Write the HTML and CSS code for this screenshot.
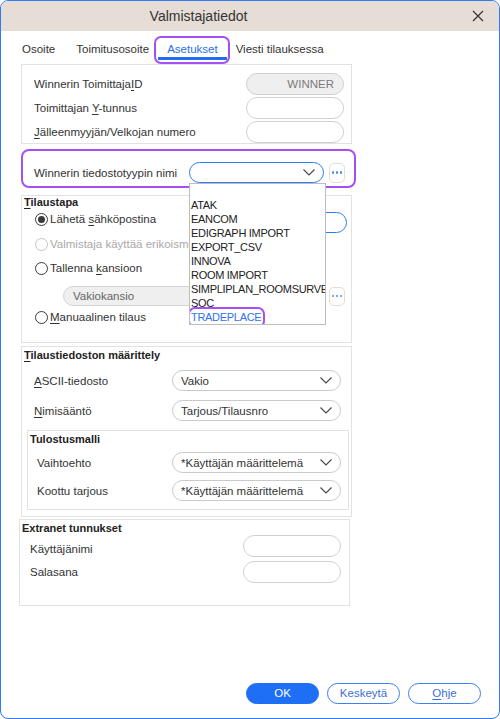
FILE: index.html
```html
<!DOCTYPE html>
<html>
<head>
<meta charset="utf-8">
<link rel="stylesheet" href="styles.css">
</head>
<body>
<div class="window">
  <div class="titlebar">
    <div class="title">Valmistajatiedot</div>
    <div class="close"><svg width="12" height="12" viewBox="0 0 12 12"><path d="M1 1 L11 11 M11 1 L1 11" stroke="#333" stroke-width="1.2" fill="none"/></svg></div>
  </div>
  <div class="tabs">
    <div class="tab first">Osoite</div>
    <div class="tab">Toimitusosoite</div>
    <div class="tab active">Asetukset<span class="hl-tab"></span></div>
    <div class="tab">Viesti tilauksessa</div>
  </div>
  <div class="content">
    <div class="group g1">
      <div class="row r1"><span class="lbl">Winnerin Toimittaja<u>I</u>D</span><div class="input ro">WINNER</div></div>
      <div class="row r1"><span class="lbl">Toimittajan <u>Y</u>-tunnus</span><div class="input"></div></div>
      <div class="row r1"><span class="lbl"><u>J</u>älleenmyyjän/Velkojan numero</span><div class="input"></div></div>
    </div>
    <div class="group g2">
      <div class="row r2">
        <span class="lbl w155">Winnerin tiedostotyypin nimi</span>
        <div class="combo-wrap">
          <div class="combo focus"><span></span><svg class="chev" width="12" height="7" viewBox="0 0 12 7"><path d="M0.5 0.5 L6 6 L11.5 0.5" stroke="#444" stroke-width="1.1" fill="none"/></svg></div>
          <div class="dropdown">
            <div class="opt">&nbsp;</div>
            <div class="opt">ATAK</div>
            <div class="opt">EANCOM</div>
            <div class="opt">EDIGRAPH IMPORT</div>
            <div class="opt">EXPORT_CSV</div>
            <div class="opt">INNOVA</div>
            <div class="opt">ROOM IMPORT</div>
            <div class="opt">SIMPLIPLAN_ROOMSURVEY</div>
            <div class="opt">SOC</div>
            <div class="opt sel"><span class="sel-txt">TRADEPLACE<span class="hl-opt"></span></span></div>
          </div>
        </div>
        <div class="dots"><i></i><i></i><i></i></div>
      </div>
    </div>
    <div class="group g3">
      <div class="gtitle"><u>T</u>ilaustapa</div>
      <div class="row rr rr1"><span class="radio on"></span><span class="lbl">Lähetä <u>s</u>ähköpostina</span><div class="input focus mail"></div></div>
      <div class="row rr rr2"><span class="radio dis"></span><span class="lbl dis clip"><u>V</u>almistaja käyttää erikoismuotoa</span></div>
      <div class="row rr rr3"><span class="radio"></span><span class="lbl">Tallenna <u>k</u>ansioon</span></div>
      <div class="row rr4"><div class="input folder">Vakiokansio</div><div class="dots"><i></i><i></i><i></i></div></div>
      <div class="row rr rr5"><span class="radio"></span><span class="lbl"><u>M</u>anuaalinen tilaus</span></div>
    </div>
    <div class="group g4">
      <div class="gtitle"><u>T</u>ilaustiedoston määrittely</div>
      <div class="row r4 r4a"><span class="lbl"><u>A</u>SCII-tiedosto</span><div class="combo"><span>Vakio</span><svg class="chev" width="12" height="7" viewBox="0 0 12 7"><path d="M0.5 0.5 L6 6 L11.5 0.5" stroke="#444" stroke-width="1.1" fill="none"/></svg></div></div>
      <div class="row r4 r4b"><span class="lbl"><u>N</u>imisääntö</span><div class="combo"><span>Tarjous/Tilausnro</span><svg class="chev" width="12" height="7" viewBox="0 0 12 7"><path d="M0.5 0.5 L6 6 L11.5 0.5" stroke="#444" stroke-width="1.1" fill="none"/></svg></div></div>
      <div class="group g4b">
        <div class="gtitle">Tulostusmalli</div>
        <div class="row r4c r4c1"><span class="lbl">Vaihtoehto</span><div class="combo"><span>*Käyttäjän määrittelemä</span><svg class="chev" width="12" height="7" viewBox="0 0 12 7"><path d="M0.5 0.5 L6 6 L11.5 0.5" stroke="#444" stroke-width="1.1" fill="none"/></svg></div></div>
        <div class="row r4c r4c2"><span class="lbl">Koottu tarjous</span><div class="combo"><span>*Käyttäjän määrittelemä</span><svg class="chev" width="12" height="7" viewBox="0 0 12 7"><path d="M0.5 0.5 L6 6 L11.5 0.5" stroke="#444" stroke-width="1.1" fill="none"/></svg></div></div>
      </div>
    </div>
    <div class="group g5">
      <div class="gtitle">Extranet tunnukset</div>
      <div class="row r5 r5a"><span class="lbl">Käyttäjänimi</span><div class="input"></div></div>
      <div class="row r5 r5b"><span class="lbl">Salasana</span><div class="input"></div></div>
    </div>
  </div>
  <div class="footer">
    <div class="btn primary">OK</div>
    <div class="btn">Keskeytä</div>
    <div class="btn"><u>O</u>hje</div>
  </div>
</div>
</body>
</html>
```

FILE: styles.css
```css
html, body {
  margin: 0;
  padding: 0;
  background: #fff;
}
body {
  font-family: "Liberation Sans", Arial, sans-serif;
  font-size: 11.5px;
  color: #333;
}
.window {
  width: 500px;
  height: 719px;
  box-sizing: border-box;
  border: 1px solid #2f7bf0;
  border-radius: 8px;
  overflow: hidden;
  display: flex;
  flex-direction: column;
  background: #fff;
}
.titlebar {
  height: 30px;
  flex: none;
  background: #e6ddd6;
  display: flex;
  align-items: center;
}
.title {
  flex: 1;
  text-align: center;
  font-size: 14px;
  color: #333;
  padding-right: 76px;
}
.close {
  width: 12px;
  height: 12px;
  margin-right: 15px;
  display: flex;
}
.tabs {
  display: flex;
  padding: 5px 0 0 12px;
  height: 24px;
  flex: none;
}
.tab {
  position: relative;
  padding: 5px 9px 0;
  line-height: 16px;
  border-bottom: 3px solid transparent;
  color: #333;
}
.tab.first {
  margin-right: 3px;
}
.tab.active {
  color: #2b6fe8;
  border-bottom-color: #1f6ef2;
}
.hl-tab {
  position: absolute;
  left: -4px;
  right: -3px;
  top: 0;
  bottom: -7px;
  border: 2px solid #a64ff5;
  border-radius: 7px;
}
.content {
  padding-left: 20px;
  display: flex;
  flex-direction: column;
  align-items: flex-start;
}
.group {
  box-sizing: border-box;
  border: 1px solid #e2e2e2;
  width: 331px;
  display: flex;
  flex-direction: column;
}
.row {
  display: flex;
  align-items: center;
}
.lbl {
  white-space: nowrap;
}
u {
  text-decoration: underline;
  text-underline-offset: 2px;
}
.input {
  box-sizing: border-box;
  width: 98px;
  height: 22px;
  border: 1px solid #d0d0d0;
  border-radius: 11px;
  margin-left: auto;
  background: #fff;
}
.input.ro {
  background: #efefef;
  color: #7a7a7a;
  text-align: right;
  padding-right: 9px;
  line-height: 20px;
}
.focus {
  border-color: #2f7bf0 !important;
}
/* group 1 */
.g1 {
  margin-top: 4px;
  height: 80px;
  padding: 8px 7px 4px 12px;
  gap: 2px;
}
.r1 {
  height: 22px;
}
/* group 2 */
.g2 {
  margin-top: 5px;
  width: 335px;
  height: 39px;
  border: 2px solid #a64ff5;
  border-radius: 8px;
  padding: 11px 0 0 11px;
}
.r2 {
  height: 21px;
}
.w155 {
  width: 155px;
}
.combo-wrap {
  position: relative;
}
.combo {
  box-sizing: border-box;
  width: 169px;
  height: 21px;
  border: 1px solid #c9c9c9;
  border-radius: 11px;
  display: flex;
  align-items: center;
  justify-content: space-between;
  padding: 0 8px 0 8px;
  margin-left: auto;
  background: #fff;
  color: #333;
}
.combo-wrap .combo {
  width: 135px;
}
.chev {
  flex: none;
}
.dots {
  box-sizing: border-box;
  width: 16px;
  height: 20px;
  border: 1px solid #e8dcd4;
  border-radius: 5px;
  display: flex;
  align-items: center;
  justify-content: center;
  gap: 1.5px;
  margin-left: 5px;
  background: #fff;
}
.dots i {
  width: 2.6px;
  height: 2.6px;
  border-radius: 50%;
  background: #4a90f0;
}
.dropdown {
  position: absolute;
  left: 0;
  top: 100%;
  width: 137px;
  box-sizing: border-box;
  border: 1px solid #bdbdbd;
  background: #fff;
  z-index: 5;
  overflow: hidden;
}
.opt {
  height: 14px;
  line-height: 14px;
  padding-left: 1px;
  white-space: nowrap;
  color: #222;
  font-size: 11px;
  letter-spacing: -0.3px;
}
.opt.sel {
  color: #2f74ea;
}
.sel-txt {
  position: relative;
}
.hl-opt {
  position: absolute;
  left: -3px;
  top: -4px;
  width: 77px;
  height: 21px;
  box-sizing: border-box;
  border: 2px solid #a64ff5;
  border-radius: 7px;
}
/* group 3 */
.g3 {
  margin-top: 7px;
  height: 148px;
  padding-left: 2px;
}
.gtitle {
  font-weight: bold;
  font-size: 11px;
  line-height: 13px;
  height: 13px;
  color: #222;
}
.rr {
  height: 20px;
  padding-left: 11px;
  align-items: center;
}
.radio {
  box-sizing: border-box;
  width: 13px;
  height: 13px;
  border-radius: 50%;
  border: 1px solid #3a3a3a;
  margin-right: 2px;
  display: flex;
  align-items: center;
  justify-content: center;
  flex: none;
  background: #fff;
}
.radio.on::after {
  content: "";
  width: 7px;
  height: 7px;
  border-radius: 50%;
  background: #3a3a3a;
}
.radio.dis {
  border-color: #c4c4c4;
}
.lbl.dis {
  color: #a9a9a9;
}
.lbl.clip {
  width: 140px;
  overflow: hidden;
}
.input.mail {
  width: 100px;
  height: 21px;
  margin-right: 4px;
  align-self: flex-start;
  margin-top: 3px;
}
.rr2 { margin-top: 5px; }
.rr3 { margin-top: 4px; }
.rr4 {
  margin-top: 8px;
  height: 20px;
  padding-left: 39px;
}
.input.folder {
  width: 260px;
  height: 20px;
  margin-left: 0;
  background: #efefef;
  color: #666;
  padding-left: 9px;
  line-height: 18px;
  border-color: #d6d6d6;
}
.rr4 .dots {
  margin-left: 6px;
  height: 19px;
}
.rr5 { margin-top: 1px; }
/* group 4 */
.g4 {
  margin-top: 3px;
  height: 171px;
  padding-left: 2px;
}
.g4 > .gtitle {
  margin-top: 1px;
  line-height: 14px;
  height: 14px;
}
.r4 {
  height: 21px;
  padding-left: 10px;
  padding-right: 10px;
}
.r4a { margin-top: 8px; }
.r4b { margin-top: 9px; }
.g4b {
  margin-top: 9px;
  margin-left: 3px;
  width: 322px;
  height: 80px;
}
.g4b .gtitle {
  margin-top: 1px;
  line-height: 14px;
  height: 14px;
  padding-left: 2px;
}
.r4c {
  height: 21px;
  padding-left: 9px;
  padding-right: 7px;
}
.r4c1 { margin-top: 6px; }
.r4c2 { margin-top: 7px; }
/* group 5 */
.g5 {
  margin-top: 2px;
  margin-left: -2px;
  height: 87px;
}
.g5 .gtitle {
  margin-top: 1px;
  line-height: 14px;
  height: 14px;
  padding-left: 2px;
}
.r5 {
  height: 21px;
  padding-left: 10px;
  padding-right: 8px;
}
.r5a .lbl {
  padding-top: 6px;
}
.r5b { margin-top: 5px; }
/* footer */
.footer {
  margin-top: auto;
  display: flex;
  justify-content: flex-end;
  gap: 8px;
  padding: 0 18px 14px 0;
}
.btn {
  box-sizing: border-box;
  width: 73px;
  height: 21px;
  border: 1px solid #3b7ff0;
  border-radius: 11px;
  text-align: center;
  line-height: 19px;
  color: #3a6fd8;
}
.btn.primary {
  background: #1e6ff5;
  border-color: #1e6ff5;
  color: #fff;
}
```
